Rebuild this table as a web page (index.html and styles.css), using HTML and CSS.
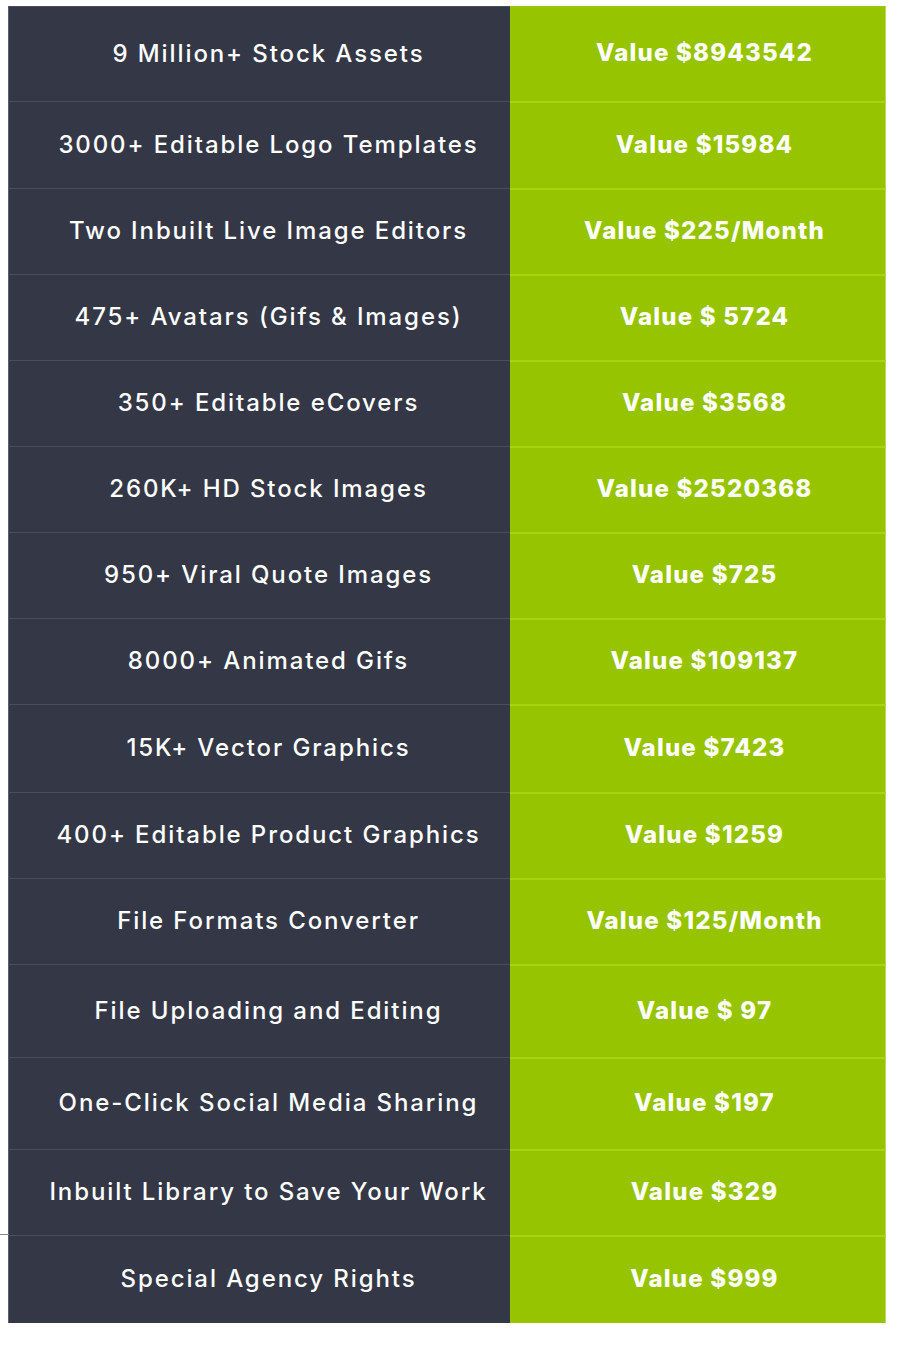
FILE: index.html
```html
<!DOCTYPE html>
<html>
<head>
<meta charset="utf-8">
<link rel="stylesheet" href="styles.css">
</head>
<body>
<div class="page">
  <div class="stray-line"></div>
  <div class="table">
    <div class="cell name">9 Million+ Stock Assets</div><div class="cell value">Value $8943542</div>
    <div class="cell name">3000+ Editable Logo Templates</div><div class="cell value">Value $15984</div>
    <div class="cell name">Two Inbuilt Live Image Editors</div><div class="cell value">Value $225/Month</div>
    <div class="cell name">475+ Avatars (Gifs &amp; Images)</div><div class="cell value">Value $ 5724</div>
    <div class="cell name">350+ Editable eCovers</div><div class="cell value">Value $3568</div>
    <div class="cell name">260K+ HD Stock Images</div><div class="cell value">Value $2520368</div>
    <div class="cell name">950+ Viral Quote Images</div><div class="cell value">Value $725</div>
    <div class="cell name">8000+ Animated Gifs</div><div class="cell value">Value $109137</div>
    <div class="cell name">15K+ Vector Graphics</div><div class="cell value">Value $7423</div>
    <div class="cell name">400+ Editable Product Graphics</div><div class="cell value">Value $1259</div>
    <div class="cell name">File Formats Converter</div><div class="cell value">Value $125/Month</div>
    <div class="cell name">File Uploading and Editing</div><div class="cell value">Value $ 97</div>
    <div class="cell name">One-Click Social Media Sharing</div><div class="cell value">Value $197</div>
    <div class="cell name">Inbuilt Library to Save Your Work</div><div class="cell value">Value $329</div>
    <div class="cell name">Special Agency Rights</div><div class="cell value">Value $999</div>
  </div>
</div>
</body>
</html>
```
FILE: styles.css
```css
html, body {
  margin: 0;
  padding: 0;
  background: #ffffff;
}
.page {
  position: relative;
  width: 900px;
  height: 1348px;
  padding-top: 6px;
  box-sizing: border-box;
}
.stray-line {
  position: absolute;
  left: 0;
  top: 1234px;
  width: 9px;
  height: 1px;
  background: #8a8b90;
}
.table {
  margin-left: 8px;
  width: 878px;
  display: grid;
  grid-template-columns: 502px 376px;
  grid-template-rows: 95px 87px 86px 86px 86px 86px 86px 86px 88px 86px 86px 93px 92px 86px 88px;
}
.cell {
  display: flex;
  align-items: center;
  justify-content: center;
  color: #ffffff;
  box-sizing: border-box;
  white-space: nowrap;
}
.name {
  background: #343746;
  border-left: 1px solid #5e6069;
  border-top: 1px solid #4a4d5a;
  font-family: "Inter", "DejaVu Sans", sans-serif;
  font-weight: 500;
  font-size: 24px;
  letter-spacing: 1.9px;
  padding-left: 18px;
  padding-bottom: 2px;
}
.value {
  background: #97c400;
  border-top: 2px solid #a6d60a;
  border-right: 1px solid #b5dc5a;
  font-family: "Inter", "DejaVu Sans", sans-serif;
  font-weight: 800;
  font-size: 24px;
  letter-spacing: 1.2px;
  padding-left: 14px;
  padding-bottom: 3px;
}
.name:first-child {
  border-top-color: #4a4d5a;
}
.value:nth-child(2) {
  border-top-width: 1px;
  border-top-color: #9cc80a;
}
```
